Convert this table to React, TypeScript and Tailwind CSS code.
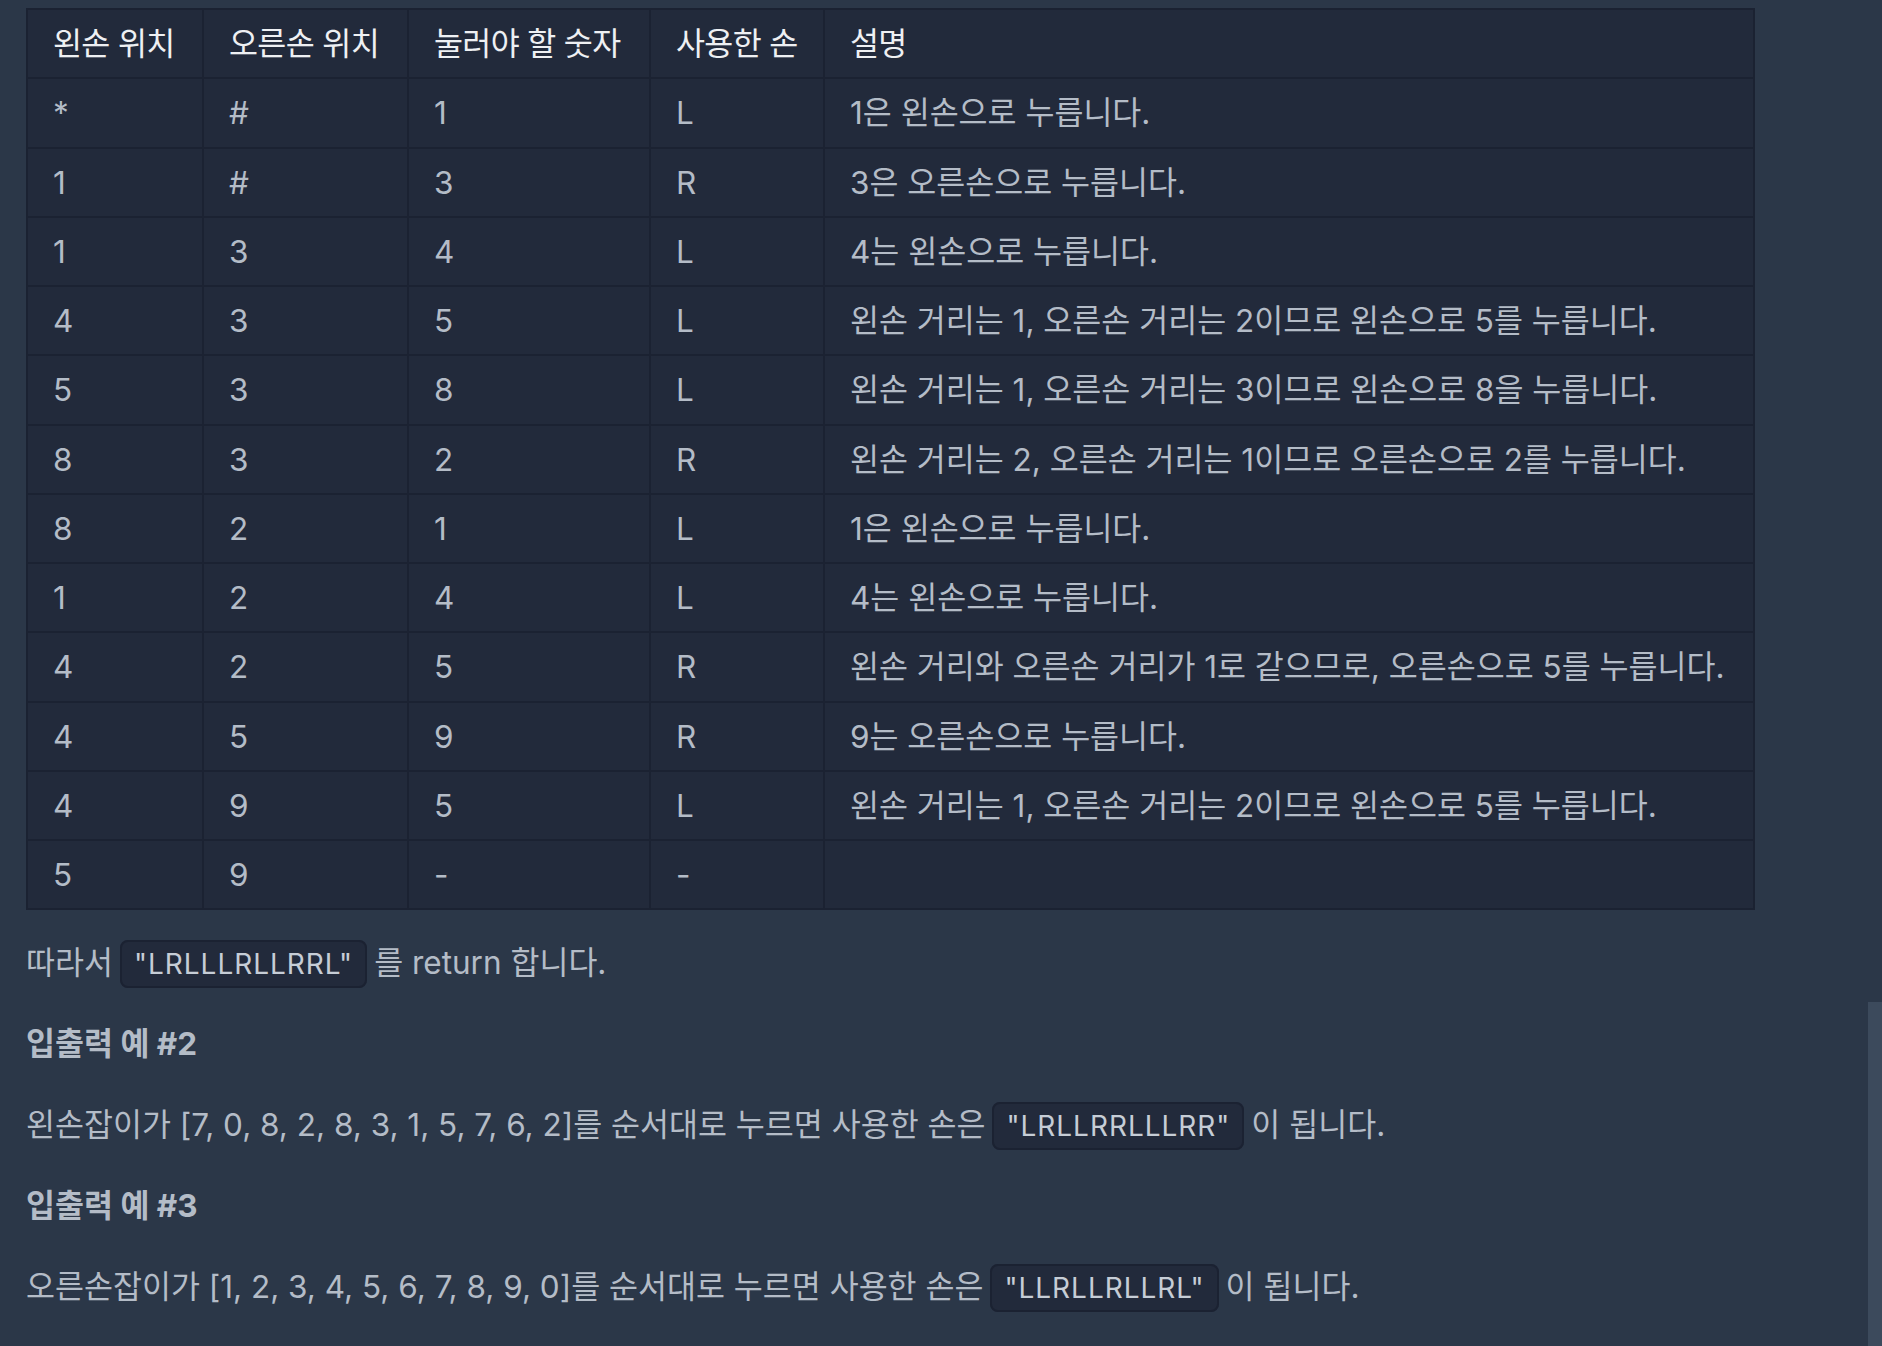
import React from 'react';

const rows: string[][] = [
    ['*', '#', '1', 'L', '1은 왼손으로 누릅니다.'],
    ['1', '#', '3', 'R', '3은 오른손으로 누릅니다.'],
    ['1', '3', '4', 'L', '4는 왼손으로 누릅니다.'],
    ['4', '3', '5', 'L', '왼손 거리는 1, 오른손 거리는 2이므로 왼손으로 5를 누릅니다.'],
    ['5', '3', '8', 'L', '왼손 거리는 1, 오른손 거리는 3이므로 왼손으로 8을 누릅니다.'],
    ['8', '3', '2', 'R', '왼손 거리는 2, 오른손 거리는 1이므로 오른손으로 2를 누릅니다.'],
    ['8', '2', '1', 'L', '1은 왼손으로 누릅니다.'],
    ['1', '2', '4', 'L', '4는 왼손으로 누릅니다.'],
    ['4', '2', '5', 'R', '왼손 거리와 오른손 거리가 1로 같으므로, 오른손으로 5를 누릅니다.'],
    ['4', '5', '9', 'R', '9는 오른손으로 누릅니다.'],
    ['4', '9', '5', 'L', '왼손 거리는 1, 오른손 거리는 2이므로 왼손으로 5를 누릅니다.'],
    ['5', '9', '-', '-', ''],
];

const headers = ['왼손 위치', '오른손 위치', '눌러야 할 숫자', '사용한 손', '설명'];
const widths = ['w-[176px]', 'w-[205px]', 'w-[242px]', 'w-[174px]', 'w-[930px]'];

function Code({ children }: { children: React.ReactNode }) {
    return (
        <code
            className="mx-[7px] rounded-lg border-2 border-[#1b2232] bg-[#222a3b] px-[12px] py-[5px] text-[28px] leading-none text-[#c6cdd6] tracking-[0.035em]"
            style={{ fontFamily: 'inherit' }}
        >
            {children}
        </code>
    );
}

export default function App() {
    return (
        <div
            className="relative h-[1346px] w-full overflow-hidden bg-[#2b3748] pl-[26px] pt-[8px] text-[31.5px] leading-[45px] text-[#b4bcc7]"
            style={{ fontFamily: 'Inter, "Noto Sans CJK KR", sans-serif' }}
        >
            {/* Table */}
            <table className="table-fixed border-collapse border-2 border-[#1b2232] bg-[#222a3b]">
                <thead>
                    <tr>
                        {headers.map((h, i) => (
                            <th
                                key={i}
                                className={`${widths[i]} h-[69.25px] whitespace-nowrap border-2 border-[#1b2232] px-[25px] py-[11px] text-left font-normal tracking-[-0.02em] text-[#eef0f3]`}
                            >
                                {h}
                            </th>
                        ))}
                    </tr>
                </thead>
                <tbody>
                    {rows.map((r, i) => (
                        <tr key={i}>
                            {r.map((c, j) => (
                                <td key={j} className="h-[69.25px] whitespace-nowrap border-2 border-[#1b2232] px-[25px] py-[11px]">
                                    {c}
                                </td>
                            ))}
                        </tr>
                    ))}
                </tbody>
            </table>

            {/* Explanation */}
            <div className="mt-[30px] flex flex-col gap-[36px]">
                <p>
                    따라서<Code>"LRLLLRLLRRL"</Code>를 return 합니다.
                </p>
                <h5 className="font-bold">입출력 예 #2</h5>
                <p>
                    왼손잡이가 [7, 0, 8, 2, 8, 3, 1, 5, 7, 6, 2]를 순서대로 누르면 사용한 손은
                    <Code>"LRLLRRLLLRR"</Code>이 됩니다.
                </p>
                <h5 className="font-bold">입출력 예 #3</h5>
                <p>
                    오른손잡이가 [1, 2, 3, 4, 5, 6, 7, 8, 9, 0]를 순서대로 누르면 사용한 손은
                    <Code>"LLRLLRLLRL"</Code>이 됩니다.
                </p>
            </div>

            {/* Scrollbar thumb */}
            <div className="absolute right-0 top-[1002px] h-[344px] w-[14px] bg-[#3c4a5c]" />
        </div>
    );
}
